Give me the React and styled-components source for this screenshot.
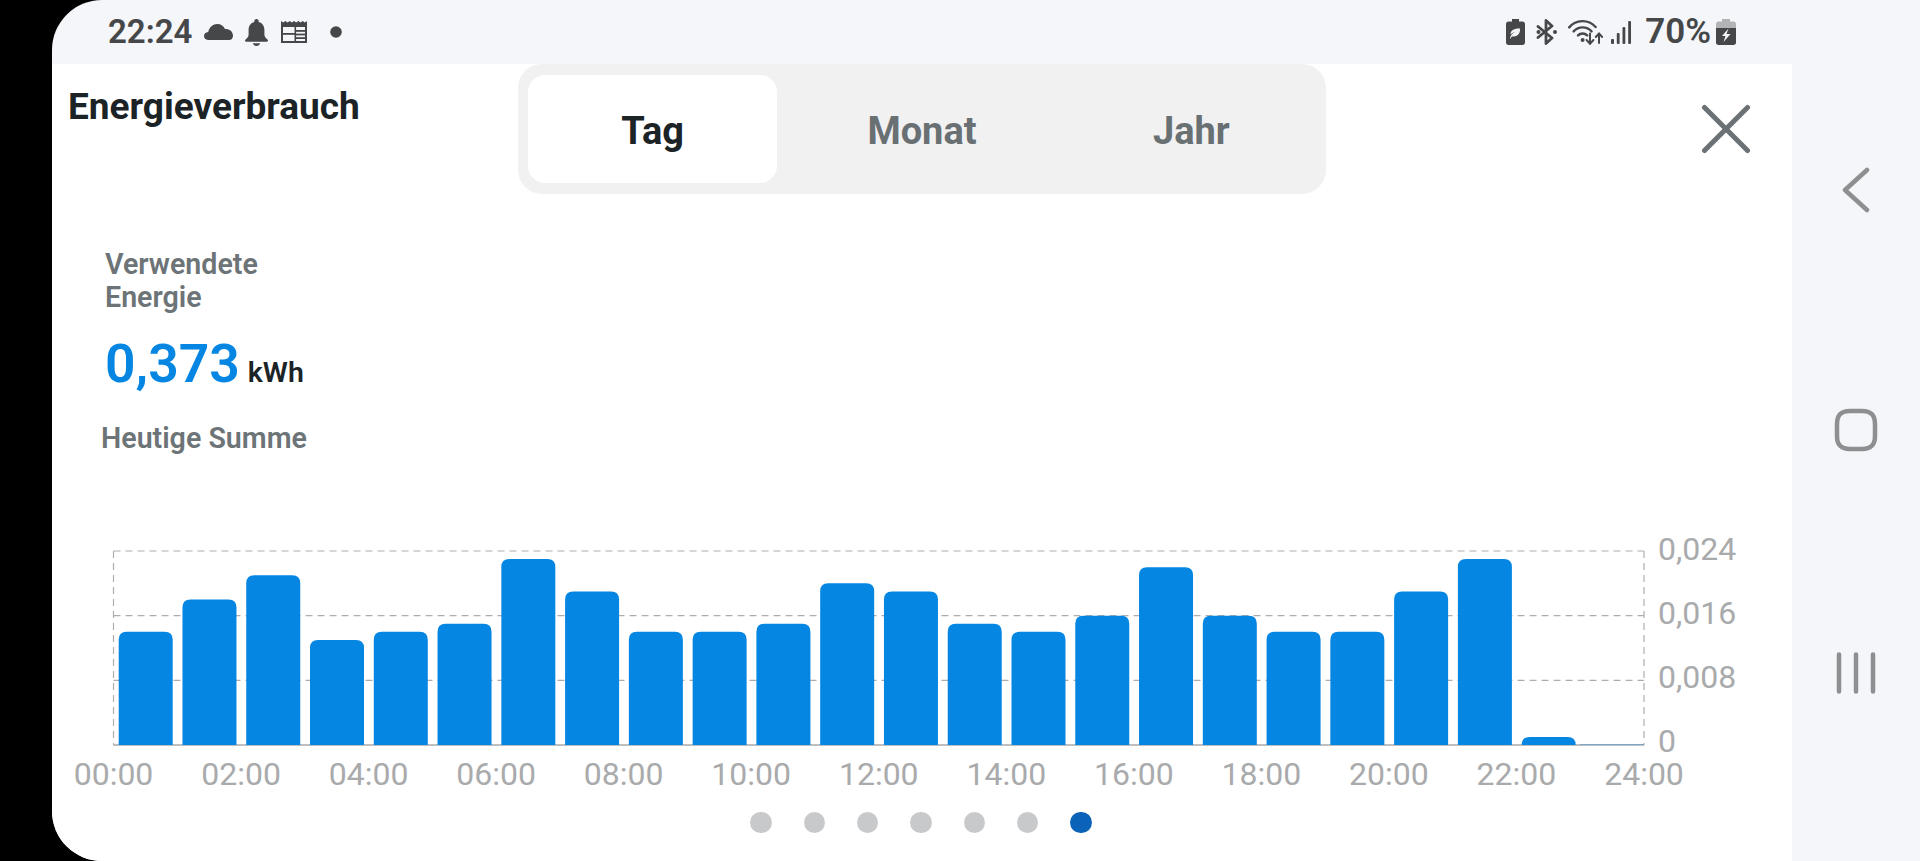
import React from "react";
import styled, { createGlobalStyle } from "styled-components";

const Global = createGlobalStyle`
  html, body { margin: 0; padding: 0; background: #000; overflow: hidden; }
  #root { width: 1920px; height: 861px; }
`;

const Device = styled.div`
  width: 1868px;
  height: 861px;
  margin-left: 52px;
  border-radius: 50px 0 0 50px;
  overflow: hidden;
  background: #f5f6fa;
  display: flex;
  flex-direction: column;
  font-family: Roboto, "Liberation Sans", sans-serif;
`;

const StatusBar = styled.header`
  height: 64px;
  flex: none;
  display: flex;
  align-items: center;
  justify-content: space-between;
  padding: 0 184px 0 56px;
  color: #454749;
`;

const StatusGroup = styled.div`
  display: flex;
  align-items: center;
  gap: ${(p) => p.$gap}px;
`;

const Time = styled.span`
  font-size: 33px;
  font-weight: 600;
  line-height: 64px;
`;

const Percent = styled.span`
  font-size: 35px;
  font-weight: 600;
  line-height: 64px;
  margin: 0 -4px 0 5px;
`;

const StatusIcon = styled.svg`
  display: block;
  flex: none;
  fill: currentColor;
  margin-left: ${(p) => p.$offset || 0}px;
`;

const Body = styled.div`
  flex: 1;
  display: flex;
  min-height: 0;
`;

const Panel = styled.main`
  width: 1740px;
  flex: none;
  background: #fff;
  display: flex;
  flex-direction: column;
`;

const Header = styled.div`
  display: grid;
  grid-template-columns: 450px 808px 1fr;
  padding-left: 16px;
  height: 130px;
`;

const Title = styled.h1`
  margin: 0;
  padding-top: 21px;
  font-size: 37px;
  line-height: 44px;
  font-weight: 700;
  color: #1c2327;
`;

const Tabs = styled.div`
  display: grid;
  grid-template-columns: repeat(3, 1fr);
  background: #f1f1f2;
  border-radius: 24px;
`;

const Tab = styled.div`
  margin: 11px 10px;
  padding-top: 4px;
  display: flex;
  align-items: center;
  justify-content: center;
  border-radius: 17px;
  font-size: 38px;
  font-weight: 700;
  background: ${(p) => (p.$active ? "#fff" : "transparent")};
  color: ${(p) => (p.$active ? "#1c2327" : "#697073")};
`;

const Close = styled.svg`
  display: block;
  justify-self: end;
  margin: 40px 41px 0 0;
`;

const Summary = styled.section`
  margin: 54px 0 0 53px;
`;

const Label = styled.div`
  font-size: 28.6px;
  line-height: 33px;
  font-weight: 600;
  color: #6d7477;
  margin-left: ${(p) => p.$shift || 0}px;
  margin-top: ${(p) => p.$top || 0}px;
`;

const Reading = styled.div`
  display: flex;
  align-items: baseline;
  gap: 8px;
  margin-top: 20px;
  height: 60px;
  line-height: 60px;
`;

const Value = styled.span`
  font-size: 53.5px;
  font-weight: 600;
  color: #0486e2;
`;

const Unit = styled.span`
  font-size: 28.5px;
  font-weight: 600;
  color: #1c2327;
`;

const ChartSvg = styled.svg`
  display: block;
  margin: 69px 0 0 18px;
  flex: none;
`;

const AxisText = styled.text`
  font-family: Roboto, "Liberation Sans", sans-serif;
  font-size: 32px;
  fill: #a9aaac;
`;

const Dots = styled.div`
  display: flex;
  justify-content: center;
  gap: 32px;
  margin-top: 15px;
  padding-right: 2px;
`;

const Dot = styled.span`
  width: 21.4px;
  height: 21.4px;
  border-radius: 50%;
  background: ${(p) => (p.$active ? "#0a63b9" : "#c8c9cb")};
`;

const NavBar = styled.nav`
  flex: 1;
  display: flex;
  flex-direction: column;
  align-items: center;
  gap: 193px;
  padding-top: 103px;
`;

const NavIcon = styled.svg`
  display: block;
  fill: none;
  stroke: #8e8f90;
  stroke-width: 4.5;
  stroke-linecap: round;
  stroke-linejoin: round;
`;

const Newspaper = () => (
  <StatusIcon width="26" height="22" viewBox="0 0 26 22" $offset={1}>
    <path d="M0 0l2.2 1.4L4.4 0l2.2 1.4L8.7 0l2.2 1.4L13 0l2.2 1.4L17.4 0l2.2 1.4L21.7 0l2.1 1.4L26 0v22H0z" />
    <rect x="2" y="6" width="22" height="14" fill="#f5f6fa" />
    <rect x="13.5" y="6" width="1.6" height="14" />
    <rect x="15" y="9" width="9" height="1.8" />
    <rect x="15" y="12.6" width="9" height="1.8" />
    <rect x="15" y="16.2" width="9" height="1.8" />
    <rect x="2" y="12" width="12" height="1.8" />
  </StatusIcon>
);

const WifiIcon = () => (
  <StatusIcon width="35" height="26" viewBox="0 0 35 26" fill="none" $offset={1}>
    <g fill="none" stroke="currentColor" strokeWidth="2.4" strokeLinecap="round">
      <path d="M1.2 8.4C8 .4 20-.2 27.6 8" />
      <path d="M5.6 12.4c5-5.2 13-5.4 18 0" />
      <path d="M10 16.4c2.6-2.6 6.6-2.6 9.2 0" />
      <path d="M22 14.6V24M18.6 21l3.4 3.8 3.4-3.8" strokeWidth="2" />
      <path d="M31 24v-9M27.8 18l3.2-3.6 3.2 3.6" strokeWidth="2" />
    </g>
    <circle cx="14.6" cy="21" r="2" fill="currentColor" />
  </StatusIcon>
);

const bars = [14, 18, 21, 13, 14, 15, 23, 19, 14, 14, 15, 20, 19, 15, 14, 16, 22, 16, 14, 14, 19, 23, 1, 0];
const hourLabels = ["00", "02", "04", "06", "08", "10", "12", "14", "16", "18", "20", "22", "24"];
const LEFT = 113.5;
const RIGHT = 1644;
const TOP = 551;
const BASE = 745;
const STEP = (RIGHT - LEFT) / 24;
const UNIT = (BASE - TOP) / 24;

const barPath = (i, v) => {
  const x = LEFT + 5.2 + i * STEP;
  const w = 54;
  const h = v * UNIT;
  const y = BASE - h;
  const r = Math.min(8, h);
  return `M${x} ${BASE}V${y + r}Q${x} ${y} ${x + r} ${y}H${x + w - r}Q${x + w} ${y} ${x + w} ${y + r}V${BASE}Z`;
};

const Chart = () => (
  <ChartSvg width="1700" height="273" viewBox="70 524 1700 273">
    <g stroke="#adadae" strokeWidth="1.2" strokeDasharray="7 5" fill="none">
      <path d={`M${LEFT} ${TOP}H${RIGHT}`} />
      <path d={`M${LEFT} 615.7H${RIGHT}`} />
      <path d={`M${LEFT} 680.3H${RIGHT}`} />
      <path d={`M${LEFT} ${TOP}V${BASE}`} />
      <path d={`M${RIGHT} ${TOP}V${BASE}`} />
    </g>
    <path d={`M${LEFT} ${BASE}H${RIGHT}`} stroke="#a9aaac" strokeWidth="1.6" />
    {bars.map((v, i) => (v > 0 ? <path key={i} d={barPath(i, v)} fill="#0486e2" /> : null))}
    <path d={`M${LEFT + 23 * STEP} ${BASE - 0.5}H${RIGHT}`} stroke="#7da6c8" strokeWidth="1" />
    {hourLabels.map((h, i) => (
      <AxisText key={h} x={LEFT + i * 2 * STEP} y="785" textAnchor="middle">{`${h}:00`}</AxisText>
    ))}
    <AxisText x="1658" y="560">0,024</AxisText>
    <AxisText x="1658" y="624">0,016</AxisText>
    <AxisText x="1658" y="688">0,008</AxisText>
    <AxisText x="1658" y="752">0</AxisText>
  </ChartSvg>
);

export default function App() {
  return (
    <>
      <Global />
      <Device>
        <StatusBar>
          <StatusGroup $gap={12}>
            <Time>22:24</Time>
            <StatusIcon width="29" height="16" viewBox="0 0 29 16">
              <path d="M5 16C2 16 0 14.4 0 12c0-2.2 1.6-3.8 4.2-4C5.2 3.2 9 0 13.4 0c3.6 0 6.4 2 7.6 5 .5-.1 1-.1 1.5 0 3.6.4 6.5 3 6.5 6.8 0 2.8-1.6 4.2-4 4.2z" />
            </StatusIcon>
            <StatusIcon width="23" height="27" viewBox="0 0 23 27">
              <path d="M11.5 0c1.3 0 2.2 1 2.2 2.2v.7c3.8 1 5.7 4 5.7 8v4.6c0 2 1 3.3 3 5 .4.3.6.7.6 1.1 0 .7-.5 1.2-1.2 1.2H1.2C.5 22.8 0 22.300 0 21.600c0-.4.2-.8.6-1.100 2-1.700 3-3 3-5v-4.600c0-4 1.900-7 5.700-8v-.7C9.300 1 10.200 0 11.500 0z" />
              <path d="M7.800 24.300h7.400c-.4 1.600-1.900 2.700-3.700 2.700s-3.300-1.100-3.700-2.700z" />
            </StatusIcon>
            <Newspaper />
            <StatusIcon width="12" height="12" viewBox="0 0 12 12" $offset={11}>
              <circle cx="6" cy="6" r="5.800" />
            </StatusIcon>
          </StatusGroup>
          <StatusGroup $gap={9}>
            <StatusIcon width="19" height="26" viewBox="0 0 19 26">
              <path d="M6 0h7v2.500h3.500c1.400 0 2.500 1 2.500 2.500v18.500c0 1.400-1.100 2.500-2.500 2.500h-14C1.100 26 0 24.900 0 23.500V5c0-1.500 1.100-2.500 2.500-2.500H6z" />
              <path d="M14 9.500c.3 4.500-1.700 7.800-6.300 8-.7 0-1.300-.1-1.700-.3-.7.8-1 1.500-1.200 2.300H4c.4-3.300 2.500-5.500 5.700-6.700-2.500.5-4.400 1.700-5 2.800-.8-3.900 3.500-6.500 9.300-6.100z" fill="#f5f6fa" />
            </StatusIcon>
            <StatusIcon width="22" height="26" viewBox="0 0 22 26" fill="none" $offset={2}>
              <path d="M2 7.500l14 11.500-6 5.500V1.500l6 5.500L2 18.500" fill="none" stroke="currentColor" strokeWidth="2.800" strokeLinejoin="round" strokeLinecap="round" />
              <circle cx="2.500" cy="13" r="2" fill="currentColor" />
              <circle cx="19" cy="13" r="2" fill="currentColor" />
            </StatusIcon>
            <WifiIcon />
            <StatusIcon width="20" height="23" viewBox="0 0 20 23" $offset={-1}>
              <rect x="0" y="18" width="3" height="5" rx="1" />
              <rect x="5.800" y="12" width="2.800" height="11" rx="1" />
              <rect x="11.500" y="6" width="2.800" height="17" rx="1" />
              <rect x="17.200" y="0" width="2.800" height="23" rx="1" />
            </StatusIcon>
            <Percent>70%</Percent>
            <StatusIcon width="20" height="26" viewBox="0 0 20 26">
              <path d="M6 0h8v2.500h3.500C19 2.500 20 3.500 20 5v4H0V5c0-1.500 1-2.500 2.500-2.500H6z" fill="#b3b4b6" />
              <path d="M0 9h20v14.500c0 1.400-1 2.500-2.500 2.500h-15C1 26 0 24.900 0 23.500z" />
              <path d="M12.500 9.500L6 17h3.500L7.500 23l7-8h-4z" fill="#f5f6fa" />
            </StatusIcon>
          </StatusGroup>
        </StatusBar>
        <Body>
          <Panel>
            <Header>
              <Title>Energieverbrauch</Title>
              <Tabs>
                <Tab $active>Tag</Tab>
                <Tab>Monat</Tab>
                <Tab>Jahr</Tab>
              </Tabs>
              <Close width="50" height="50" viewBox="0 0 50 50" fill="none" stroke="#6b7174" strokeWidth="5" strokeLinecap="round">
                <path d="M3.500 3.500L46.500 46.500M46.500 3.500L3.500 46.500" />
              </Close>
            </Header>
            <Summary>
              <Label>Verwendete</Label>
              <Label>Energie</Label>
              <Reading>
                <Value>0,373</Value>
                <Unit>kWh</Unit>
              </Reading>
              <Label $shift={-4} $top={28}>Heutige Summe</Label>
            </Summary>
            <Chart />
            <Dots>
              {[0, 1, 2, 3, 4, 5, 6].map((i) => (
                <Dot key={i} $active={i === 6} />
              ))}
            </Dots>
          </Panel>
          <NavBar>
            <NavIcon width="30" height="46" viewBox="0 0 30 46">
              <path d="M26 3L4 23l22 20" />
            </NavIcon>
            <NavIcon width="48" height="48" viewBox="0 0 48 48">
              <path d="M18 5h12c9 0 13 4 13 13v12c0 9-4 13-13 13H18c-9 0-13-4-13-13V18c0-9 4-13 13-13z" />
            </NavIcon>
            <NavIcon width="44" height="52" viewBox="0 0 44 52">
              <path d="M5 7.500v37M22 7.500v37M39 7.500v37" />
            </NavIcon>
          </NavBar>
        </Body>
      </Device>
    </>
  );
}
